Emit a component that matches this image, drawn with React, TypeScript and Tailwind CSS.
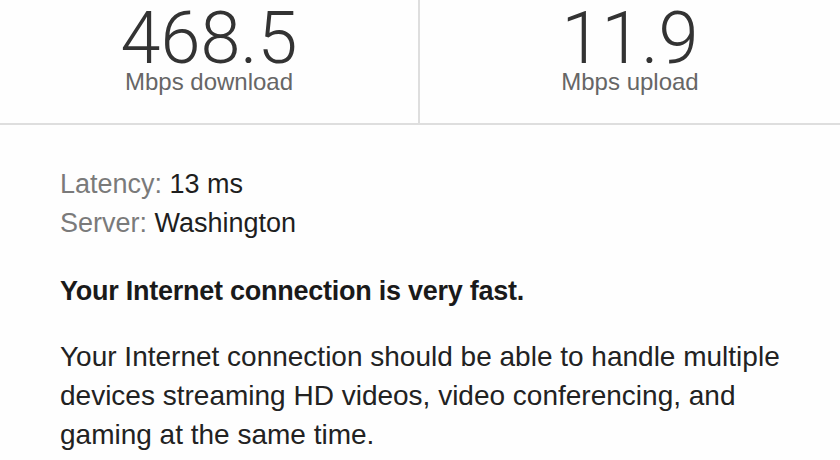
const Stat = ({ value, label, border }: { value: string; label: string; border?: boolean }) => (
  <div
    className={
      "flex flex-col items-center pt-[8px] " +
      (border ? "border-r-2 border-[#dedede]" : "")
    }
  >
    <span className="font-['Roboto'] font-light text-[72px] leading-[62px] text-[#333]">
      {value}
    </span>
    <span className="text-[24px] leading-[24px] text-[#666]">{label}</span>
  </div>
);

export default function App() {
  return (
    <div className="w-[840px] h-[460px] overflow-hidden bg-[#fefefe] font-['Liberation_Sans',Arial,sans-serif]">
      {/* speeds */}
      <div className="grid grid-cols-2 h-[125px] border-b-2 border-[#dedede]">
        <Stat value="468.5" label="Mbps download" border />
        <Stat value="11.9" label="Mbps upload" />
      </div>

      {/* details */}
      <div className="px-[60px] pt-[40px] text-[27px] leading-[39px] text-[#1e1e1e]">
        <p>
          <span className="text-[#7a7a7a]">Latency:</span> 13 ms
        </p>
        <p>
          <span className="text-[#7a7a7a]">Server:</span> Washington
        </p>
        <p className="mt-[29px] font-bold tracking-[-0.25px] text-[#1a1a1a]">
          Your Internet connection is very fast.
        </p>
        <p className="mt-[26px] text-[28px] text-[#222]">
          Your Internet connection should be able to handle multiple devices streaming HD videos,
          video conferencing, and gaming at the same time.
        </p>
      </div>
    </div>
  );
}
